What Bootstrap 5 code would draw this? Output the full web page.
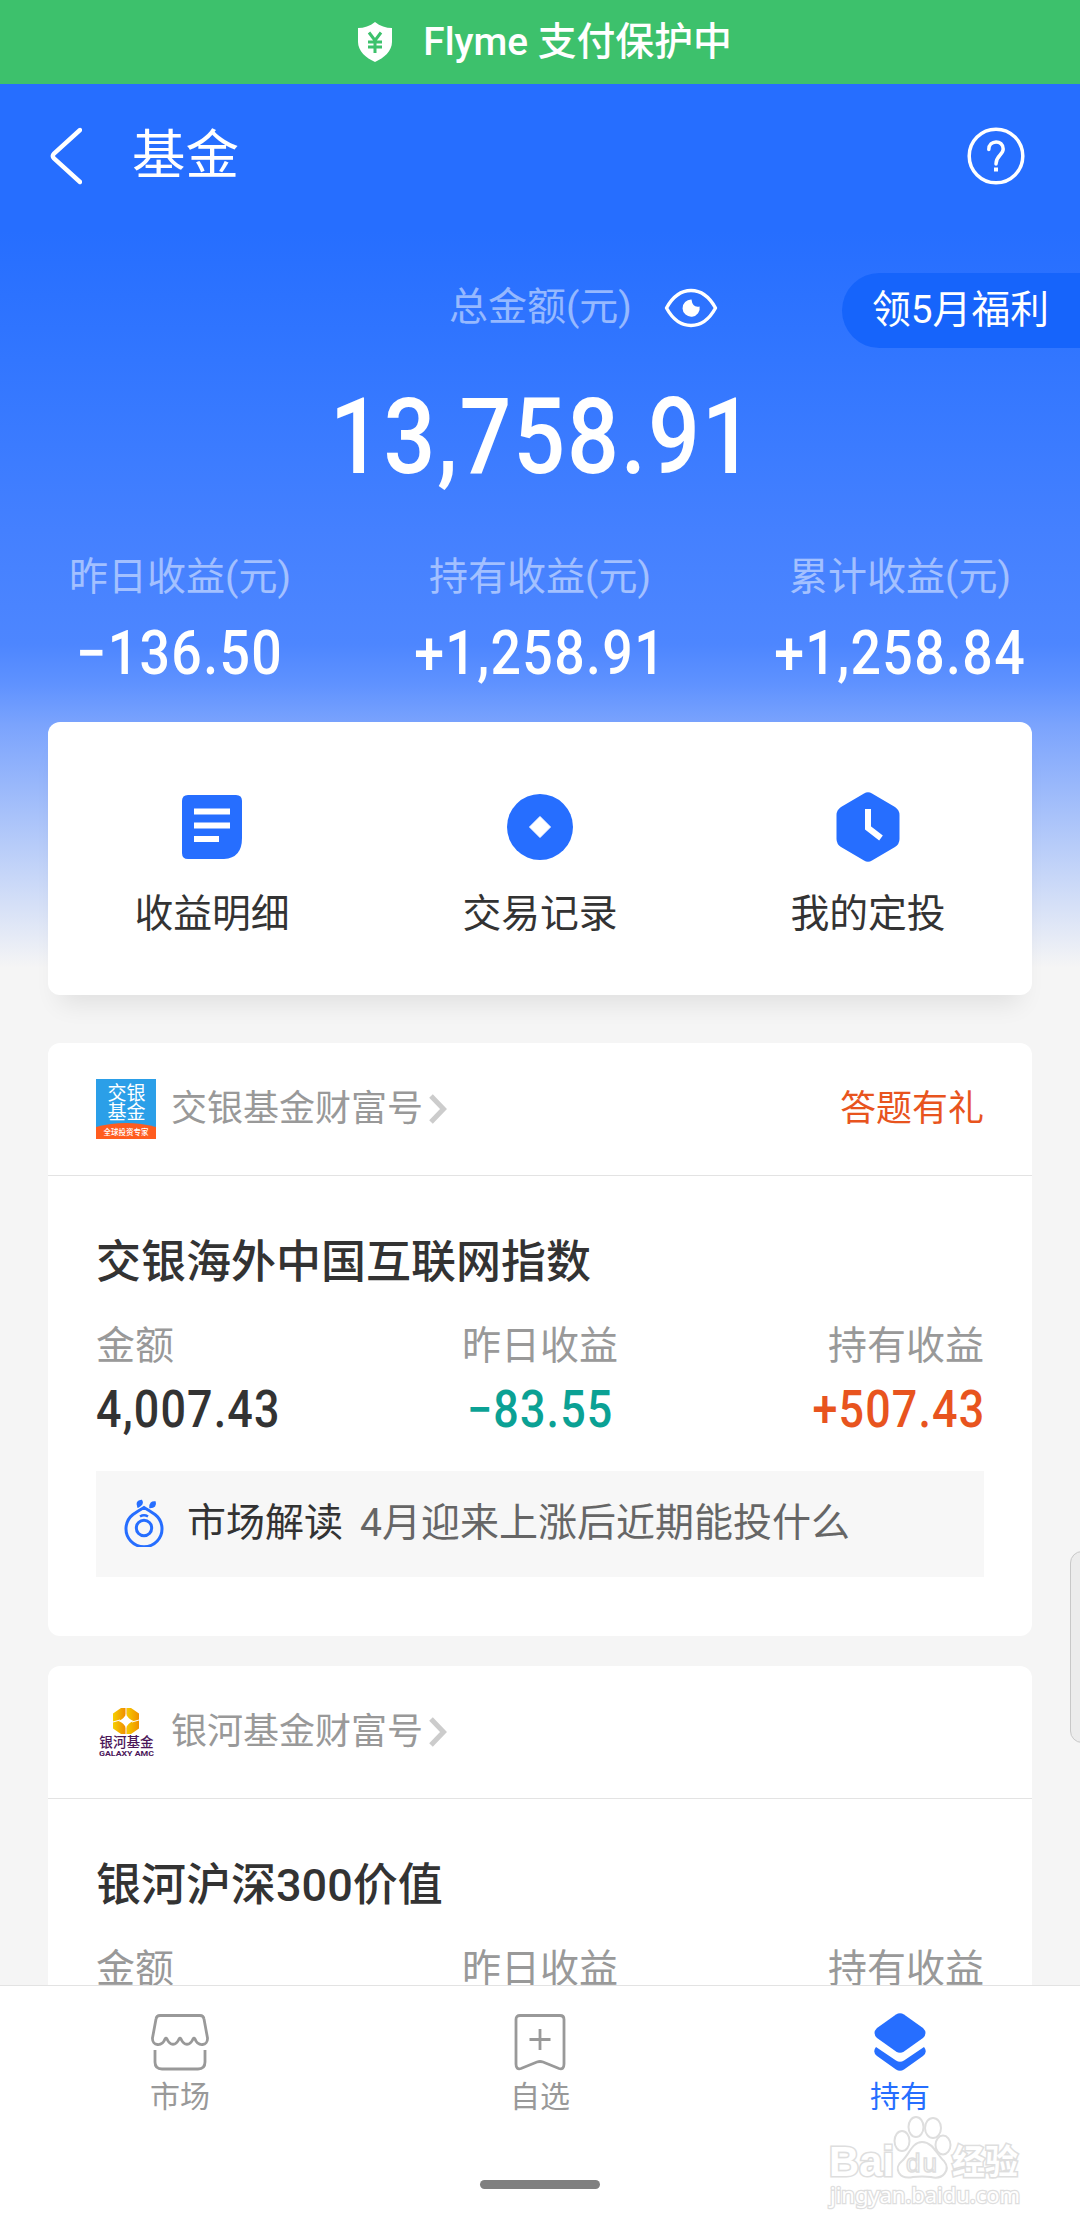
<!DOCTYPE html>
<html lang="zh-CN">
<head>
<meta charset="utf-8">
<meta name="viewport" content="width=device-width, initial-scale=1">
<title>基金</title>
<link rel="stylesheet" href="https://cdn.jsdelivr.net/npm/bootstrap@5.3.0/dist/css/bootstrap.min.css">
<style>
body{font-family:Roboto,"Noto Sans CJK SC",sans-serif;background:#f5f5f5;color:#333;font-size:39px;line-height:1}
svg{display:block;flex:none}
.screen{width:1080px;height:2232px;overflow:hidden}
.guard{height:84px;background:#3dc16c;font-weight:500;font-size:38.8px;gap:30px;padding-left:9px}
.scroller{height:1901px;overflow:hidden;background:linear-gradient(#266eff 0,#266eff 146px,#3276ff 276px,#4480ff 446px,#4d86ff 560px,#5f92ff 600px,#7aa3fd 640px,#f5f5f5 884px)}
.topbar{height:144px;padding:0 55px 0 49px}
.title{font-size:53.5px;margin-left:50px}
.total{height:134px;padding-top:45px}
.total-label{width:280px;margin-left:449px;gap:32px;height:69px}
.soft{color:rgba(255,255,255,.5)}
.perk{width:238px;height:75px;border-radius:38px 0 0 38px;background:#1664fb;padding-left:30px;font-size:38.8px}
.din{display:inline-block;font-weight:500;transform:scaleX(.88);letter-spacing:.025em;white-space:nowrap}
.total-num{font-size:105px;height:110px;line-height:110px;margin-top:21px;padding-left:6px}
.total-num .din{transform:scaleX(.87);letter-spacing:.02em}
.stats{padding-top:65px;height:229px}
.stats .din{font-size:61px;margin-top:26px}
.tile{border:0;border-radius:12px;margin:0 48px;background:#fff}
.actions{height:273px;box-shadow:0 20px 24px -12px rgba(0,0,0,.09);font-size:38.8px}
.actions .icon-box{height:72px;margin-top:69px;margin-bottom:32px}
.fund{height:593px;margin-top:48px}
.fund.next{margin-top:30px}
.fund-head{height:133px;padding:0 48px;border-bottom:1px solid #e3e3e3;font-size:36px;color:#999}
.fund-head svg.logo{margin-right:15px}
.gift{color:#e8541e}
.fund-body{padding:62px 48px 0}
.fund-name{font-size:45px;font-weight:500;margin:0;line-height:50px}
.figures{margin-top:39px}
.figures .lbl{color:#999}
.figures .din{font-size:51px;margin-top:18px}
.figures .text-end .din{margin-right:-.025em}
.from-start{transform-origin:left}
.from-end{transform-origin:right}
.fall{color:#0ba194}
.rise{color:#e8541e}
.tip{height:106px;background:#f7f7f7;margin-top:36px;padding:0 0 2px 27px}
.tip-name{margin-left:22px}
.tip-text{color:#666;margin-left:17px}
.tabs{height:247px;border-top:1px solid #e3e3e3;background:#fff;font-size:30px;color:#999}
.tabs .icon-box{height:60px;margin-top:26px;margin-bottom:10px}
.active-tab{color:#266eff}
.homebar{width:120px;height:9px;border-radius:5px;background:#808080;left:480px;top:194px}
.handle{right:-4px;top:1551px;width:14px;height:192px;border:1.5px solid #c8c8c8;border-radius:12px 0 0 12px;background:#ececec}
.stamp{left:820px;top:2110px}
</style>
<script src="https://cdn.jsdelivr.net/npm/bootstrap@5.3.0/dist/js/bootstrap.bundle.min.js"></script>
</head>
<body>
<div class="screen position-relative">
  <div class="guard d-flex align-items-center justify-content-center text-white">
    <svg width="36" height="40" viewBox="0 0 36 40"><path d="M18 0C23 4 29 6 35 6V20C35 29 27 36 18 40C9 36 1 29 1 20V6C7 6 13 4 18 0Z" fill="#fff"/><path d="M12 10.500L18 18.500L24 10.500M11 20H25M11 25H25M18 18.500V31" fill="none" stroke="#3dc16c" stroke-width="3"/></svg>
    <span>Flyme 支付保护中</span>
  </div>

  <main class="scroller">
    <header class="topbar d-flex align-items-center text-white">
      <svg width="33" height="60" viewBox="0 0 33 60"><path d="M31 4L5 27.500Q2.500 30 5 32.500L31 56" fill="none" stroke="#fff" stroke-width="4.400" stroke-linecap="round"/></svg>
      <span class="title">基金</span>
      <svg class="ms-auto" width="58" height="58" viewBox="0 0 58 58" fill="none" stroke="#fff" stroke-width="3.500"><circle cx="29" cy="29" r="26.800"/><path d="M21.800 22.500C21.800 12.500 36.200 12.500 36.200 22C36.200 28 29 28.500 29 37" stroke-linecap="round"/><path d="M29 40.500V44.500" stroke-width="4"/></svg>
    </header>

    <section class="total d-flex">
      <div class="total-label d-flex align-items-center">
        <span class="soft text-nowrap">总金额(元)</span>
        <svg width="54" height="40" viewBox="0 0 54 40"><path d="M2.500 20C8 10 16 2.500 27 2.500S46 10 51.500 20C46 30 38 37.500 27 37.500S8 30 2.500 20Z" fill="none" stroke="#fff" stroke-width="3.400" stroke-linejoin="round"/><path d="M27.500 11.500A8.600 8.600 0 1 0 35.600 18.500Q28.500 20 27.500 11.500Z" fill="#fff"/></svg>
      </div>
      <div class="perk ms-auto d-flex align-items-center text-white text-nowrap">领5月福利</div>
    </section>

    <div class="total-num text-center text-white"><span class="din">13,758.91</span></div>

    <section class="stats row g-0 text-center text-white">
      <div class="col-4"><div class="soft">昨日收益(元)</div><span class="din">−136.50</span></div>
      <div class="col-4"><div class="soft">持有收益(元)</div><span class="din">+1,258.91</span></div>
      <div class="col-4"><div class="soft">累计收益(元)</div><span class="din">+1,258.84</span></div>
    </section>

    <section class="tile actions row g-0 text-center">
      <div class="col-4">
        <div class="icon-box d-flex align-items-center justify-content-center"><svg width="62" height="66" viewBox="0 0 62 66"><path d="M7 1H55Q61 1 61 7V44Q61 64 43 65H7Q1 65 1 59V7Q1 1 7 1Z" fill="#266eff"/><path d="M13 17.500H49M13 31.500H49M13 45H38" stroke="#fff" stroke-width="6"/></svg></div>
        <div>收益明细</div>
      </div>
      <div class="col-4">
        <div class="icon-box d-flex align-items-center justify-content-center"><svg width="66" height="66" viewBox="0 0 66 66"><circle cx="33" cy="33" r="33" fill="#266eff"/><path d="M33 22.500L43.500 33L33 43.500L22.500 33Z" fill="#fff" stroke="#fff" stroke-linejoin="round"/></svg></div>
        <div>交易记录</div>
      </div>
      <div class="col-4">
        <div class="icon-box d-flex align-items-center justify-content-center"><svg width="64" height="70" viewBox="0 0 64 70"><path d="M28 1.500Q32 -1 36 1.500L59 15Q63.500 18 63.500 23V47Q63.500 52 59 55L36 68.500Q32 71 28 68.500L5 55Q.5 52 .5 47V23Q.5 18 5 15Z" fill="#266eff"/><path d="M32 17V36L45 46" fill="none" stroke="#fff" stroke-width="6"/></svg></div>
        <div>我的定投</div>
      </div>
    </section>

    <article class="tile fund">
      <div class="fund-head d-flex align-items-center">
        <svg class="logo" width="60" height="60" viewBox="0 0 60 60"><rect width="60" height="60" fill="#2b9fe8"/><path d="M0 48Q30 40 60 48V60H0Z" fill="#ff5c1f"/><g fill="#fff" text-anchor="middle"><text x="30.500" y="20.500" font-size="19">交银</text><text x="30.500" y="39.500" font-size="19">基金</text><text x="30" y="55.500" font-size="7.500" font-weight="500">全球投资专家</text></g></svg>
        <span>交银基金财富号</span>
        <svg class="ms-1" width="22" height="32" viewBox="0 0 22 32"><path d="M4 3L16.500 16L4 29" fill="none" stroke="#ccc" stroke-width="5"/></svg>
        <span class="gift ms-auto">答题有礼</span>
      </div>
      <div class="fund-body">
        <h2 class="fund-name">交银海外中国互联网指数</h2>
        <div class="figures row g-0">
          <div class="col-4"><div class="lbl">金额</div><span class="din from-start">4,007.43</span></div>
          <div class="col-4 text-center"><div class="lbl">昨日收益</div><span class="din fall">−83.55</span></div>
          <div class="col-4 text-end"><div class="lbl">持有收益</div><span class="din rise from-end">+507.43</span></div>
        </div>
        <div class="tip d-flex align-items-center text-nowrap">
          <svg width="42" height="48" viewBox="0 0 42 48" fill="none" stroke="#266eff"><path d="M21 8.500Q15 12 10 15.500A18 18 0 1 0 32 15.500Q27 12 21 8.500Z" stroke-width="3"/><circle cx="21" cy="29" r="7.700" stroke-width="3"/><path d="M17 17.500Q21 15 25 17.500" stroke-width="2.500"/><path d="M15 8Q12.500 2 18.500 1.500Q21 5 15 8ZM27 8.500Q27 2.500 32 3Q33.500 8 27 8.500Z" fill="#266eff" stroke-width="1.500"/></svg>
          <span class="tip-name">市场解读</span>
          <span class="tip-text">4月迎来上涨后近期能投什么</span>
        </div>
      </div>
    </article>

    <article class="tile fund next">
      <div class="fund-head d-flex align-items-center">
        <svg class="logo" width="60" height="60" viewBox="0 0 60 60"><defs><linearGradient id="gold"><stop offset="0" stop-color="#f5d000"/><stop offset=".5" stop-color="#f08a00"/><stop offset=".55" stop-color="#f5c800"/><stop offset="1" stop-color="#f09000"/></linearGradient></defs><path d="M25 6H35L43 11.500V26.500L35 32H25L17 26.500V11.500Z" fill="url(#gold)"/><path d="M30 12Q32 17 37.500 19Q32 21 30 26Q28 21 22.500 19Q28 17 30 12Z" fill="#fff"/><path d="M30 6V13M30 25V32M17 20L24 18M43 18L36 20" stroke="#fff" stroke-width="1"/><g fill="#4b1659" text-anchor="middle"><text x="30.500" y="44.700" font-size="13.600" font-weight="500">银河基金</text><text x="30.500" y="54.300" font-size="8" font-weight="700" textLength="55" lengthAdjust="spacingAndGlyphs">GALAXY AMC</text></g></svg>
        <span>银河基金财富号</span>
        <svg class="ms-1" width="22" height="32" viewBox="0 0 22 32"><path d="M4 3L16.500 16L4 29" fill="none" stroke="#ccc" stroke-width="5"/></svg>
      </div>
      <div class="fund-body">
        <h2 class="fund-name">银河沪深300价值</h2>
        <div class="figures row g-0">
          <div class="col-4"><div class="lbl">金额</div></div>
          <div class="col-4 text-center"><div class="lbl">昨日收益</div></div>
          <div class="col-4 text-end"><div class="lbl">持有收益</div></div>
        </div>
      </div>
    </article>
  </main>

  <nav class="tabs position-relative">
    <div class="row g-0 text-center">
      <div class="col-4">
        <div class="icon-box d-flex align-items-center justify-content-center"><svg width="60" height="58" viewBox="0 0 60 58" fill="none" stroke="#999" stroke-width="2.800"><path d="M10 2.500H50Q53.500 2.500 54 6L57.500 25C58 33 48 34 45 26Q44 24.500 43 26C40 33 34 33 31 26Q30 24.500 29 26C26 33 20 33 17 26Q16 24.500 15 26C12 34 2 33 2.500 25L6 6Q6.500 2.500 10 2.500Z"/><path d="M5 37V49Q5 56 12 56H48Q55 56 55 49V37"/></svg></div>
        <div>市场</div>
      </div>
      <div class="col-4">
        <div class="icon-box d-flex align-items-center justify-content-center"><svg width="54" height="58" viewBox="0 0 54 58" fill="none" stroke="#999" stroke-width="2.800"><path d="M7 2.500H47Q51 2.500 51 6.500V51Q51 57 46 55.500L30 49Q27 48 24 49L8 55.500Q3 57 3 51V6.500Q3 2.500 7 2.500ZM27 16V37M16.500 26.500H37.500"/></svg></div>
        <div>自选</div>
      </div>
      <div class="col-4 active-tab">
        <div class="icon-box d-flex align-items-center justify-content-center"><svg width="52" height="58" viewBox="0 0 52 58" fill="#266eff"><path d="M22 1.500Q26 -1 30 1.500L49 15Q54 20 49 25L30 38.500Q26 41 22 38.500L3 25Q-2 20 3 15Z"/><path d="M2 34L22 47.500Q26 50 30 47.500L50 34Q54 39 49 43L30 56.500Q26 59 22 56.500L3 43Q-2 39 2 34Z"/></svg></div>
        <div>持有</div>
      </div>
    </div>
    <div class="homebar position-absolute"></div>
  </nav>

  <div class="handle position-absolute"></div>
  <svg class="stamp position-absolute" width="220" height="105" viewBox="0 0 220 105" fill="#fff" stroke="#dedede" stroke-width="2">
    <g paint-order="stroke" font-weight="700" stroke-width="3.200">
      <text x="9" y="66" font-size="43" textLength="65" lengthAdjust="spacingAndGlyphs" font-family="Liberation Sans">Bai</text>
      <text x="132" y="64" font-size="34" textLength="66" lengthAdjust="spacingAndGlyphs">经验</text>
    </g>
    <ellipse cx="82" cy="31" rx="7.500" ry="10"/><ellipse cx="96" cy="17" rx="7.500" ry="10"/><ellipse cx="113" cy="18" rx="8" ry="10"/><ellipse cx="123" cy="35" rx="7.500" ry="9.500"/>
    <path d="M102 32C113 32 117 45 124 51C131 60 123 70 111 67Q102 66 93 67C79 70 73 58 82 51C89 45 92 32 102 32Z"/>
    <text x="86" y="62" font-size="26" textLength="31" stroke-width="1.500" font-family="Liberation Sans">du</text>
    <text x="10" y="93" font-size="22" textLength="190" lengthAdjust="spacingAndGlyphs" stroke-width="2.600" paint-order="stroke" font-family="Noto Sans">jingyan.baidu.com</text>
  </svg>
</div>
</body>
</html>
